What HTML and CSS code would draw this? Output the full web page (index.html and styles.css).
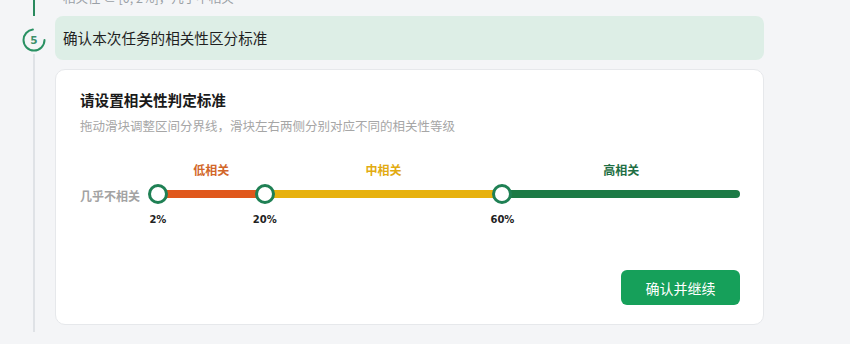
FILE: index.html
```html
<!DOCTYPE html>
<html lang="zh-CN">
<head>
<meta charset="utf-8">
<title>相关性区分标准</title>
<link rel="stylesheet" href="styles.css">
</head>
<body>
<div class="steps">
  <div class="step step-prev">
    <div class="rail"><span class="rail-line rail-line-done"></span></div>
    <p class="prev-text">相关性 ∈ [0, 2%]，几乎不相关</p>
  </div>
  <div class="step step-current">
    <div class="rail">
      <svg class="step-icon" viewBox="0 0 24 24" width="24" height="24" aria-hidden="true">
        <circle cx="12" cy="12" r="10.5" fill="none" stroke="#2a9163" stroke-width="2" stroke-linecap="round" stroke-dasharray="48 66"/>
        <text x="12" y="15.8" text-anchor="middle" class="step-num">5</text>
      </svg>
      <span class="rail-line"></span>
    </div>
    <div class="step-body">
      <div class="step-head">确认本次任务的相关性区分标准</div>
      <section class="card">
        <h2 class="card-title">请设置相关性判定标准</h2>
        <p class="card-sub">拖动滑块调整区间分界线，滑块左右两侧分别对应不同的相关性等级</p>
        <div class="slider">
          <div class="zone-labels">
            <span></span>
            <span class="zone zone-low">低相关</span>
            <span class="zone zone-mid">中相关</span>
            <span class="zone zone-high">高相关</span>
          </div>
          <span class="none-label">几乎不相关</span>
          <div class="track">
            <span class="seg"></span>
            <span class="seg seg-low"></span>
            <span class="seg seg-mid"></span>
            <span class="seg seg-high"></span>
            <span class="handle" style="left:2%"></span>
            <span class="handle" style="left:20%"></span>
            <span class="handle" style="left:60%"></span>
          </div>
          <div class="pcts">
            <span class="pct" style="left:2%">2%</span>
            <span class="pct" style="left:20%">20%</span>
            <span class="pct" style="left:60%">60%</span>
          </div>
        </div>
        <div class="actions">
          <button class="btn-primary" type="button">确认并继续</button>
        </div>
      </section>
    </div>
  </div>
</div>
</body>
</html>
```
FILE: styles.css
```css
* { box-sizing: border-box; }
html, body { margin: 0; padding: 0; }
body {
  background: #f4f5f7;
  font-family: "Noto Sans CJK SC", "Noto Sans", sans-serif;
  color: #222;
  width: 850px;
  height: 344px;
  overflow: hidden;
}
.steps {
  margin-top: -10px;
  width: 764px;
}
.step { display: flex; }
.rail {
  flex: 0 0 24px;
  margin: 0 9px 0 22px;
  display: flex;
  flex-direction: column;
  align-items: center;
}
.rail-line {
  display: block;
  width: 2px;
  flex: 1;
  background: #dfe2e6;
}
.rail-line-done { background: #2a8a5e; }
.step-prev { height: 26px; }
.prev-text {
  margin: 0 0 0 8px;
  font-size: 12.5px;
  line-height: 16px;
  color: #9aa0a6;
}
.step-icon { display: block; margin-top: 12px; margin-bottom: 2px; }
.step-num {
  font-family: "DejaVu Sans", sans-serif;
  font-weight: bold;
  font-size: 10.5px;
  fill: #3d8f6a;
}
.step-body { flex: 1; padding-bottom: 7px; }
.step-head {
  height: 44px;
  line-height: 44px;
  padding-left: 8px;
  background: #ddeee6;
  border-radius: 8px;
  font-size: 14.6px;
  color: #1f1f1f;
}
.card {
  margin-top: 9px;
  background: #fff;
  border: 1px solid #e6e8eb;
  border-radius: 10px;
  padding: 20px 23px 19px 24px;
}
.card-title {
  margin: 0;
  font-size: 14.6px;
  line-height: 20px;
  font-weight: 700;
  color: #1a1a1a;
}
.card-sub {
  margin: 7px 0 0;
  font-size: 12.5px;
  line-height: 18px;
  color: #a6a6a6;
}
.slider {
  margin-top: 27px;
  display: grid;
  grid-template-columns: 66px 1fr;
  grid-template-rows: auto auto auto;
}
.zone-labels {
  grid-column: 2;
  grid-row: 1;
  display: grid;
  grid-template-columns: 2fr 18fr 40fr 40fr;
  text-align: center;
  font-size: 12px;
  line-height: 16px;
  font-weight: 600;
}
.zone-low { color: #d2672a; }
.zone-mid { color: #e2ab12; }
.zone-high { color: #1f6f44; }
.none-label {
  grid-column: 1;
  grid-row: 2;
  margin-top: 10px;
  font-size: 12px;
  line-height: 16px;
  font-weight: 600;
  color: #a3a3a3;
}
.track {
  grid-column: 2;
  grid-row: 2;
  margin-top: 6px;
  position: relative;
  display: grid;
  grid-template-columns: 2fr 18fr 40fr 40fr;
  align-items: center;
  height: 20px;
}
.seg { height: 8px; display: block; }
.seg-low { background: #e0581c; }
.seg-mid { background: #e7b10e; }
.seg-high { background: #1c7a45; border-radius: 0 4px 4px 0; }
.handle {
  position: absolute;
  top: 0;
  width: 20px;
  height: 20px;
  margin-left: -10px;
  border-radius: 50%;
  background: #fff;
  border: 3px solid #1f8054;
}
.pcts {
  grid-column: 2;
  grid-row: 3;
  margin-top: 10px;
  position: relative;
  height: 12px;
}
.pct {
  position: absolute;
  top: 0;
  transform: translateX(-50%);
  font-family: "DejaVu Sans", sans-serif;
  font-weight: bold;
  font-size: 10px;
  line-height: 12px;
  color: #222;
}
.actions {
  display: flex;
  justify-content: flex-end;
  margin-top: 44px;
}
.btn-primary {
  width: 119px;
  height: 35px;
  border: 0;
  border-radius: 6px;
  background: #16a05a;
  color: #fff;
  font-family: "Noto Sans CJK SC", sans-serif;
  font-size: 14px;
  font-weight: 400;
  cursor: pointer;
}
```
